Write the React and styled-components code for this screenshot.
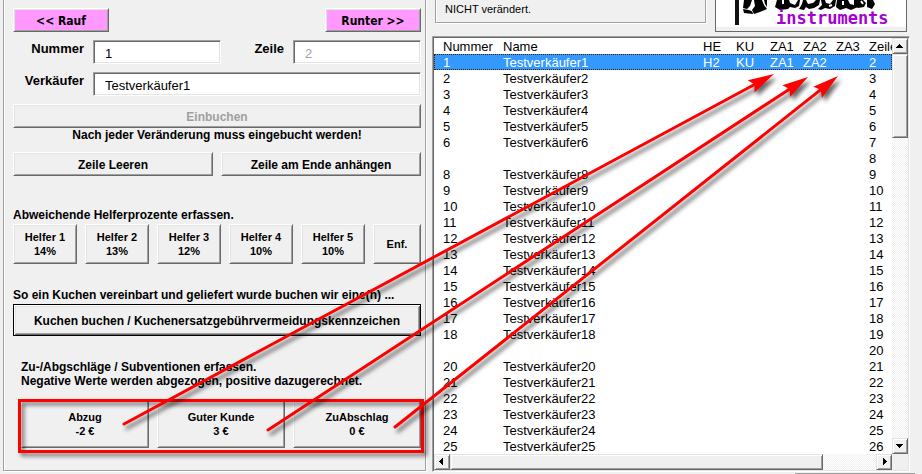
import { useState } from "react";
import { createGlobalStyle, styled } from "styled-components";

const columns = [
  { name: "Nummer", width: 69 },
  { name: "Name" },
  { name: "HE", width: 33 },
  { name: "KU", width: 34 },
  { name: "ZA1", width: 33 },
  { name: "ZA2", width: 33 },
  { name: "ZA3", width: 33 },
  { name: "Zeile", width: 23 },
];

// lines 8 and 20 are empty
const rows = Array.from({ length: 25 }, (_, i) => {
  const zeile = i + 2;
  const nummer = zeile - 1;
  const empty = zeile === 8 || zeile === 20;
  return {
    zeile,
    nummer: empty ? "" : nummer,
    name: empty ? "" : `Testverkäufer${nummer}`,
    marks: i === 0 ? ["H2", "KU", "ZA1", "ZA2", ""] : ["", "", "", "", ""],
  };
});

const helfer = ["14%", "13%", "12%", "10%", "10%"];

const zuschlaege = [
  { name: "Abzug", wert: "-2 €" },
  { name: "Guter Kunde", wert: "3 €" },
  { name: "ZuAbschlag", wert: "0 €" },
];

const arrows = [
  [124, 424, 774, 74],
  [268, 430, 808, 77],
  [395, 427, 838, 76],
];

function Logo() {
  return (
    <LogoSvg viewBox="0 0 190 31" role="img" aria-label="instruments">
      <rect width="190" height="27" fill="#fff" />
      <rect x="19" y="0" width="4" height="25" fill="#111" />
      <path d="M28 0h8l-2 6-3 3-4-1zM27 9l6 1q4 1 4 4l-9-1z" />
      <path d="M38 0h8l2 5 3 4-7 3-6 2-2-4 3-4zM48 0h3v7l-2-3z" />
      <path d="M61 0h12l1 3 5 2 3-5h2l-1 6-4 2-5-1-2 2-8 1-5-3z" />
      <path d="M87 0h3l2 4 5-1 3-3h4l-1 5-5 3-5 1-3-2-2 3-5-1 3-5z" />
      <path d="M105 0h4l1 3 4 1 3-4h3l-1 6-5 3-5-1-4 2-3-1 4-4z" />
      <path d="M121 0h11l2 4 4 1 2-2 2 4-7 3-5-2-6 2-4-3z" />
      <path d="M138 0h9l3 3-2 4-6 1-4-3zM151 0h6l2 4-3 5-5-2z" />
      <path
        d="M67 0v4M113 6l3-1M127 1v4M145 1l2 3"
        stroke="#fff"
        strokeWidth="2"
        fill="none"
      />
      <LogoText x="60" y="24">
        instruments
      </LogoText>
    </LogoSvg>
  );
}

function Triangle({ d }) {
  return (
    <svg width="8" height="8" viewBox="0 0 8 8" shapeRendering="crispEdges">
      <path d={d} />
    </svg>
  );
}

function Arrow({ from }) {
  const [x1, y1, x2, y2] = from;
  const angle = (Math.atan2(y2 - y1, x2 - x1) * 180) / Math.PI;
  const length = Math.hypot(x2 - x1, y2 - y1);
  return (
    <g transform={`translate(${x2} ${y2}) rotate(${angle})`}>
      <path d={`M${-length} 0H-20`} strokeWidth="3" strokeLinecap="round" />
      <path d="M0 0L-26 -7L-22 0L-26 7Z" stroke="none" />
    </g>
  );
}

function App() {
  const [nummer, setNummer] = useState("1");
  const [verkaeufer, setVerkaeufer] = useState("Testverkäufer1");
  const [selected, setSelected] = useState(0);

  return (
    <>
      <GlobalStyle />
      <Page>
        <Columns>
          <Panel>
            <Bar>
              <PinkButton>&lt;&lt; Rauf</PinkButton>
              <PinkButton>Runter &gt;&gt;</PinkButton>
            </Bar>
            <Fields>
              <Label htmlFor="nummer">Nummer</Label>
              <Input
                id="nummer"
                value={nummer}
                onChange={(e) => setNummer(e.target.value)}
              />
              <Label htmlFor="zeile">Zeile</Label>
              <Input id="zeile" value="2" disabled readOnly />
              <Label htmlFor="verkaeufer">Verkäufer</Label>
              <Input
                id="verkaeufer"
                $wide
                value={verkaeufer}
                onChange={(e) => setVerkaeufer(e.target.value)}
              />
            </Fields>
            <Section $gap={8}>
              <Button disabled>Einbuchen</Button>
              <Note $center>
                Nach jeder Veränderung muss eingebucht werden!
              </Note>
            </Section>
            <Section $gap={10}>
              <Split>
                <Button>Zeile Leeren</Button>
                <Button>Zeile am Ende anhängen</Button>
              </Split>
            </Section>
            <Section $gap={32}>
              <Note>Abweichende Helferprozente erfassen.</Note>
              <HelferRow>
                {helfer.map((prozent, i) => (
                  <SmallButton key={i} $height={40}>
                    Helfer {i + 1}
                    <br />
                    {prozent}
                  </SmallButton>
                ))}
                <SmallButton $height={40}>Enf.</SmallButton>
              </HelferRow>
            </Section>
            <Section $gap={24}>
              <Note>
                So ein Kuchen vereinbart und geliefert wurde buchen wir eine(n)
                ...
              </Note>
              <DefaultButton $height={32}>
                Kuchen buchen / Kuchenersatzgebührvermeidungskennzeichen
              </DefaultButton>
            </Section>
            <Section $gap={24} $indent>
              <Note>
                Zu-/Abgschläge / Subventionen erfassen.
                <br />
                Negative Werte werden abgezogen, positive dazugerechnet.
              </Note>
              <Highlighted>
                {zuschlaege.map((z) => (
                  <SmallButton key={z.name} $height={48}>
                    {z.name}
                    <br />
                    {z.wert}
                  </SmallButton>
                ))}
              </Highlighted>
            </Section>
          </Panel>

          <Side>
            <Top>
              <Message>NICHT verändert.</Message>
              <LogoBox>
                <Logo />
              </LogoBox>
            </Top>
            <ListBox>
              <Table>
                <colgroup>
                  {columns.map((c) => (
                    <Col key={c.name} $width={c.width} />
                  ))}
                </colgroup>
                <thead>
                  <tr>
                    {columns.map((c) => (
                      <Th key={c.name}>{c.name}</Th>
                    ))}
                  </tr>
                </thead>
                <tbody>
                  {rows.map((row, i) => (
                    <Row
                      key={row.zeile}
                      $selected={i === selected}
                      onClick={() => setSelected(i)}
                    >
                      <Td>{row.nummer}</Td>
                      <Td>{row.name}</Td>
                      {row.marks.map((mark, j) => (
                        <Td key={j}>{mark}</Td>
                      ))}
                      <Td>{row.zeile}</Td>
                    </Row>
                  ))}
                </tbody>
              </Table>
              <Track $vertical>
                <ScrollButton aria-label="Nach oben">
                  <Triangle d="M0 6h7v-1h-1v-1h-1v-1h-1v-1h-1v1h-1v1h-1v1h-1z" />
                </ScrollButton>
                <Thumb $size={84} />
                <Spacer />
                <ScrollButton aria-label="Nach unten">
                  <Triangle d="M0 2h7v1h-1v1h-1v1h-1v1h-1v-1h-1v-1h-1v-1h-1z" />
                </ScrollButton>
              </Track>
              <Track>
                <ScrollButton aria-label="Nach links">
                  <Triangle d="M5 0v7h-1v-1h-1v-1h-1v-1h-1v-1h1v-1h1v-1h1v-1z" />
                </ScrollButton>
                <Thumb $grow={373} />
                <Spacer $grow={53} />
                <ScrollButton aria-label="Nach rechts">
                  <Triangle d="M3 0v7h1v-1h1v-1h1v-1h1v-1h-1v-1h-1v-1h-1v-1z" />
                </ScrollButton>
              </Track>
            </ListBox>
          </Side>
        </Columns>
        <NextFrame />
        <Arrows viewBox="0 0 922 474" preserveAspectRatio="none" aria-hidden>
          {arrows.map((a, i) => (
            <Arrow key={i} from={a} />
          ))}
        </Arrows>
      </Page>
    </>
  );
}

export default App;

const GlobalStyle = createGlobalStyle`
  * {
    box-sizing: border-box;
  }

  body {
    margin: 0;
    background-color: #f0f0f0;
    color: black;
    font-family: "Liberation Sans", Arial, sans-serif;
    font-size: 13px;
  }
`;

const Page = styled.main`
  position: relative;
  overflow: hidden;
`;

const Columns = styled.div`
  display: grid;
  grid-template-columns: minmax(0, 424fr) minmax(0, 478fr);
  align-items: start;
  gap: 5px;
  padding: 0 12px 0 3px;
`;

const Panel = styled.section`
  margin-right: 1px;
  padding: 8px 4px 22px 9px;
  border: 1px solid #a0a0a0;
  border-top: none;
  box-shadow: 1px 1px white, inset 1px 0 white;
`;

const Bar = styled.div`
  display: flex;
  justify-content: space-between;
`;

const Fields = styled.div`
  display: grid;
  grid-template-columns: 80px 1fr 72px 1fr;
  gap: 8px 0;
  margin-top: 8px;
`;

const Label = styled.label`
  padding-right: 9px;
  font-weight: bold;
  font-size: 13px;
  line-height: 18px;
  text-align: right;
`;

const Input = styled.input`
  grid-column: ${(props) => (props.$wide ? "2 / -1" : "auto")};
  width: 100%;
  min-width: 0;
  height: 24px;
  padding: 2px 11px 0;
  border: 1px solid;
  border-color: #a0a0a0 white white #a0a0a0;
  box-shadow: inset 1px 1px #696969, inset -1px -1px #e3e3e3;
  background-color: white;
  font-family: inherit;
  font-size: 13px;

  &:disabled {
    color: #a0a0a0;
  }
`;

const Button = styled.button`
  width: 100%;
  min-width: 0;
  height: ${(props) => props.$height || 24}px;
  padding: 1px 2px 0;
  border: 1px solid;
  border-color: white #696969 #696969 white;
  box-shadow: inset 1px 1px #e3e3e3, inset -1px -1px #a0a0a0;
  background-color: #f0f0f0;
  color: black;
  font-family: inherit;
  font-weight: bold;
  font-size: 12px;
  line-height: 14px;

  &:disabled {
    color: #a0a0a0;
  }
`;

const SmallButton = styled(Button)`
  padding: 0 2px;
  font-size: 11px;
`;

const PinkButton = styled(Button)`
  width: 96px;
  background-color: #ff99ff;
  font-family: "DejaVu Sans Condensed", "DejaVu Sans", sans-serif;
`;

const DefaultButton = styled(Button)`
  border-color: black;
  box-shadow: inset 1px 1px white, inset -1px -1px #696969,
    inset 2px 2px #e3e3e3, inset -2px -2px #a0a0a0;
`;

const Section = styled.div`
  display: flex;
  flex-direction: column;
  margin-top: ${(props) => props.$gap}px;
  padding-left: ${(props) => (props.$indent ? 8 : 0)}px;
`;

const Note = styled.p`
  margin: 0 0 ${(props) => (props.$center ? 0 : 2)}px;
  font-weight: bold;
  font-size: 12px;
  line-height: 14px;
  text-align: ${(props) => (props.$center ? "center" : "left")};
  white-space: nowrap;
`;

const Split = styled.div`
  display: grid;
  grid-template-columns: 1fr 1fr;
  gap: 8px;
`;

const HelferRow = styled.div`
  display: grid;
  grid-template-columns: repeat(5, 64fr) 48fr;
  gap: 8px;
`;

const Highlighted = styled.div`
  position: relative;
  display: grid;
  grid-template-columns: repeat(3, 1fr);
  gap: 8px;
  margin-top: 10px;

  &::after {
    content: "";
    position: absolute;
    inset: -1px -3px -5px;
    border: 3px solid red;
    filter: drop-shadow(3px 3px 2px rgba(0, 0, 0, 0.6));
    pointer-events: none;
  }
`;

const Side = styled.section`
  display: flex;
  flex-direction: column;
`;

const Top = styled.div`
  display: flex;
  align-items: flex-start;
  gap: 9px;
  height: 36px;
  padding: 0 3px;
`;

const Message = styled.div`
  flex: 1;
  height: 23px;
  padding: 2px 9px;
  border: 1px solid #a0a0a0;
  border-top: none;
  box-shadow: 1px 1px white, inset 1px 0 white;
  font-size: 11px;
  line-height: 14px;
`;

const LogoBox = styled.div`
  width: 192px;
  height: 32px;
  border: 1px solid #696969;
  border-top: none;
`;

const LogoSvg = styled.svg`
  display: block;
  width: 190px;
  height: 31px;
`;

const LogoText = styled.text`
  fill: #a500d2;
  font-family: "DejaVu Sans Mono", monospace;
  font-weight: bold;
  font-size: 17px;
`;

const ListBox = styled.div`
  display: grid;
  grid-template-columns: minmax(0, 1fr) 16px;
  border: 1px solid;
  border-color: #a0a0a0 white white #a0a0a0;
  box-shadow: inset 1px 1px #696969, inset -1px -1px #e3e3e3;
  padding: 1px;
`;

const Table = styled.table`
  width: 100%;
  table-layout: fixed;
  border-collapse: collapse;
  background-color: white;
  font-size: 13px;
  line-height: 14px;
`;

const Col = styled.col`
  width: ${(props) => (props.$width ? `${props.$width}px` : "auto")};
`;

const Th = styled.th`
  height: 16px;
  padding: 2px 0 0;
  overflow: hidden;
  font-weight: normal;
  text-align: left;
  white-space: nowrap;

  &:first-child {
    padding-left: 9px;
  }
`;

const Td = styled.td`
  height: 16px;
  padding: 2px 0 0;
  overflow: hidden;
  white-space: nowrap;

  &:first-child {
    padding-left: 9px;
  }
`;

const Row = styled.tr`
  background-color: ${(props) => (props.$selected ? "#3399ff" : "white")};
  color: ${(props) => (props.$selected ? "white" : "black")};
  outline: ${(props) => (props.$selected ? "1px dotted #402000" : "none")};
  outline-offset: -1px;
`;

const Track = styled.div`
  display: flex;
  flex-direction: ${(props) => (props.$vertical ? "column" : "row")};
  height: ${(props) => (props.$vertical ? "auto" : "16px")};
  background: repeating-conic-gradient(#f0f0f0 0 25%, white 0 50%) 0 0 / 2px 2px;
`;

const ScrollButton = styled.button`
  display: flex;
  flex: none;
  align-items: center;
  justify-content: center;
  width: 16px;
  height: 16px;
  padding: 0;
  border: 1px solid;
  border-color: #e3e3e3 #696969 #696969 #e3e3e3;
  box-shadow: inset 1px 1px white, inset -1px -1px #a0a0a0;
  background-color: #f0f0f0;
`;

const Thumb = styled.div`
  flex: ${(props) => (props.$grow ? `${props.$grow} 0 0` : `0 0 ${props.$size}px`)};
  border: 1px solid;
  border-color: #e3e3e3 #696969 #696969 #e3e3e3;
  box-shadow: inset 1px 1px white, inset -1px -1px #a0a0a0;
  background-color: #f0f0f0;
`;

const Spacer = styled.div`
  flex: ${(props) => props.$grow || 1} 0 0;
`;

const NextFrame = styled.div`
  width: 120px;
  height: 1px;
  margin: 1px 7px 0 auto;
  background-color: #a0a0a0;
`;

const Arrows = styled.svg`
  position: absolute;
  inset: 0;
  width: 100%;
  height: 474px;
  fill: red;
  stroke: red;
  filter: drop-shadow(3px 4px 2px rgba(0, 0, 0, 0.6));
  pointer-events: none;
`;
